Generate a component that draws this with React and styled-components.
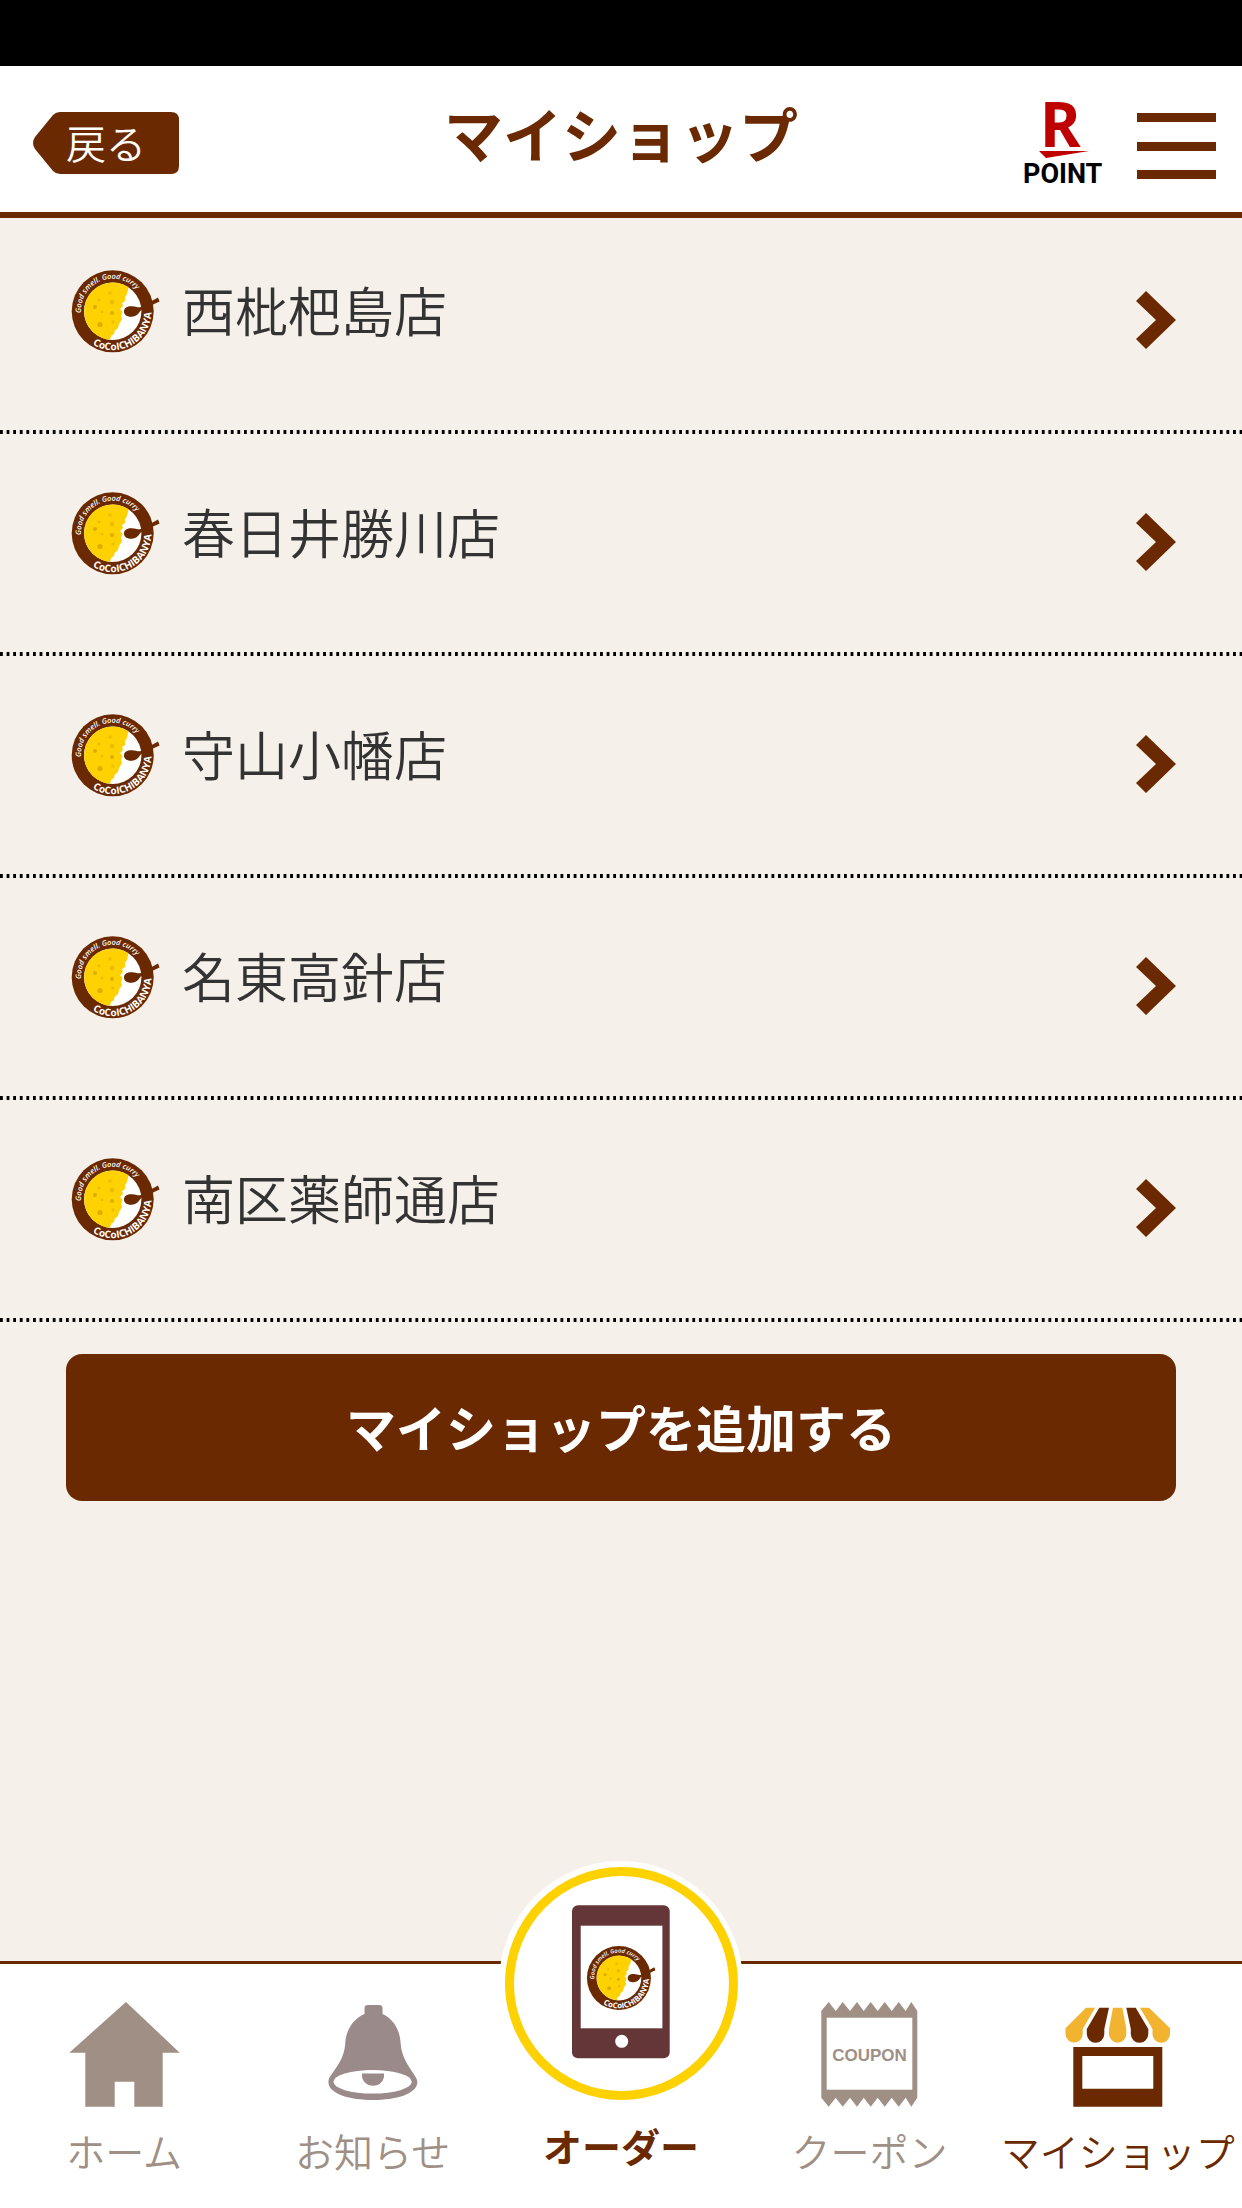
// React imports
import React from "react";

// Style
import styled, { createGlobalStyle, ThemeProvider } from "styled-components";

const theme = {
  colors: {
    brown: "#6a2900",
    bg: "#f5f0ea",
    text: "#333333",
    muted: "#a08f85",
    bell: "#9a8a89",
    yellow: "#fed100",
    awning: "#f2b430",
    phone: "#653637",
    red: "#bf0000",
  },
};
const { colors } = theme;

const GlobalStyle = createGlobalStyle`
  * {
    box-sizing: border-box;
  }
  body {
    margin: 0;
    background-color: ${colors.bg};
    font-family: "Noto Sans CJK JP", sans-serif;
  }
  svg {
    display: block;
    flex-shrink: 0;
    overflow: visible;
  }
`;

const Page = styled.div`
  display: flex;
  flex-direction: column;
  min-height: 100vh;
`;

const StatusBar = styled.div`
  height: 66px;
  background-color: #000;
`;

const Header = styled.header`
  display: grid;
  grid-template-columns: 1fr auto 1fr;
  align-items: center;
  height: 152px;
  padding: 8px 26px 0;
  background-color: #fff;
  border-bottom: 6px solid ${(props) => props.theme.colors.brown};
`;

const BackButton = styled.button`
  display: grid;
  justify-self: start;
  align-items: center;
  margin-left: 7px;
  padding: 0;
  border: none;
  background: none;
  color: #fff;
  font-family: inherit;
  font-weight: 350;
  font-size: 40px;
  line-height: 56px;
  text-align: left;
  cursor: pointer;

  > * {
    grid-area: 1 / 1;
  }
  span {
    padding: 0 0 2px 33px;
  }
`;

const Title = styled.h1`
  margin: 0;
  padding-bottom: 20px;
  color: ${(props) => props.theme.colors.brown};
  font-weight: 700;
  font-size: 59px;
  line-height: 80px;
`;

const HeaderTools = styled.div`
  display: flex;
  align-items: center;
  justify-content: flex-end;
  gap: 34px;
`;

const MenuButton = styled.button`
  display: flex;
  flex-direction: column;
  justify-content: space-between;
  width: 79px;
  height: 72px;
  padding: 6px 0 0;
  border: none;
  background: none;
  cursor: pointer;

  span {
    width: 100%;
    height: 9px;
    background-color: ${(props) => props.theme.colors.brown};
  }
`;

const ShopList = styled.ul`
  display: flex;
  flex-direction: column;
  gap: 6px;
  margin: 0;
  padding: 0;
  list-style: none;
`;

const ShopLink = styled.a`
  display: flex;
  align-items: flex-start;
  height: 216px;
  padding: 52px 66px 0 71px;
  color: ${(props) => props.theme.colors.text};
  text-decoration: none;
  background-image: linear-gradient(to right, #000 50%, transparent 50%);
  background-repeat: repeat-x;
  background-position: left bottom;
  background-size: calc(100% / 188) 4px;
`;

const ShopName = styled.span`
  flex: 1;
  padding-left: 15px;
  font-weight: 350;
  font-size: 53px;
  line-height: 78px;
`;

const Chevron = styled.svg`
  margin-top: 21px;
`;

const AddButton = styled.button`
  height: 147px;
  margin: 32px 66px;
  padding: 0 0 4px;
  border: none;
  border-radius: 16px;
  background-color: ${(props) => props.theme.colors.brown};
  color: #fff;
  font-family: inherit;
  font-weight: 700;
  font-size: 50px;
  line-height: 72px;
  cursor: pointer;
`;

const TabBar = styled.nav`
  display: grid;
  grid-template-columns: repeat(5, 1fr);
  height: 247px;
  margin-top: auto;
  border-top: 3px solid ${(props) => props.theme.colors.brown};
  background-color: #fff;
`;

const Tab = styled.a`
  display: flex;
  flex-direction: column;
  align-items: center;
  gap: ${(props) => (props.$main ? "12px" : "15px")};
  padding-top: ${(props) => (props.$main ? "0" : "38px")};
  color: ${(props) =>
    props.$active ? props.theme.colors.brown : props.theme.colors.muted};
  font-weight: ${(props) => (props.$main ? 700 : 350)};
  font-size: 39px;
  line-height: 56px;
  text-decoration: none;
  white-space: nowrap;

  svg {
    margin-top: ${(props) => (props.$main ? "-103px" : "0")};
  }
`;

// Plate, curry and spoon inside the lettered ring
const LogoMark = ({ id }) => (
  <g>
    <defs>
      <path id={`${id}-top`} d="M10.2 43 A31.5 31.5 0 0 1 71 29" />
      <path id={`${id}-bottom`} d="M21.5 74.4 A38.6 38.6 0 0 0 80.2 38" />
    </defs>
    <circle cx="41.7" cy="41.3" r="41" fill={colors.brown} />
    <circle cx="41.7" cy="41.3" r="28.7" fill="#fff" />
    <path
      d="M57.5 17.2 A28.7 28.7 0 1 0 39 69.8 L40 66 L43 64 L43.5 61 L47 58 L48 54 L51 49 L50 46 L51.5 42 L49 39 L52 36 L51 33 L54 31 L54 27 L56 24 Z"
      fill={colors.yellow}
    />
    <g fill="#dcae00">
      <circle cx="24" cy="37" r="2" />
      <circle cx="29" cy="54.5" r="2.6" />
      <circle cx="41" cy="32" r="2.2" opacity="0.6" />
      <circle cx="41" cy="43" r="2" />
      <circle cx="39" cy="23" r="1.8" opacity="0.5" />
      <circle cx="28" cy="30" r="1.4" opacity="0.6" />
      <circle cx="42" cy="52" r="1.6" opacity="0.5" />
      <circle cx="31" cy="42" r="1.3" opacity="0.6" />
    </g>
    <path
      d="M53 41.5 C53 37.5 57 36 61 36.3 C65 36.5 67 38 70 37 L87 27.6 L88.6 31.4 L71 39.5 C68 41 68 46 61 46.7 C56 47 53 45 53 41.5 Z"
      fill={colors.brown}
    />
    <g fill="#fff" fontFamily="Open Sans, sans-serif">
      <text fontSize="7.4" fontWeight="600" fontStyle="italic">
        <textPath href={`#${id}-top`}>Good smell. Good curry</textPath>
      </text>
      <text fontSize="10" fontWeight="700">
        <textPath href={`#${id}-bottom`}>CoCoICHIBANYA</textPath>
      </text>
    </g>
  </g>
);

const ShopLogo = ({ id }) => (
  <svg width="96" height="84" viewBox="0 0 96 84" aria-hidden="true">
    <LogoMark id={id} />
  </svg>
);

const PointLogo = () => (
  <svg width="80" height="84" viewBox="0 0 80 84" role="img" aria-label="R POINT">
    <text
      x="17"
      y="46"
      fill={colors.red}
      fontFamily="Noto Sans, sans-serif"
      fontWeight="700"
      fontSize="62"
    >
      R
    </text>
    <path d="M16 50 H66 L23 57 Z" fill={colors.red} />
    <text
      x="0"
      y="82"
      fill="#000"
      fontFamily="Roboto, sans-serif"
      fontWeight="700"
      fontSize="27"
    >
      POINT
    </text>
  </svg>
);

const HomeIcon = () => (
  <svg width="111" height="105" viewBox="0 0 111 105" aria-hidden="true">
    <path
      d="M57 0 L110.7 50.7 H93.7 V104.7 H65.3 V79.7 H45.7 V104.7 H16.3 V50.7 H0.3 Z"
      fill={colors.muted}
    />
  </svg>
);

const BellIcon = () => (
  <svg width="90" height="105" viewBox="0 -2 90 105" aria-hidden="true">
    <path
      d="M36.5 10 V4 Q36.5 1 40 1 H51 Q54.5 1 54.5 4 V10 C66 15 72 27 72.6 39 C73.5 53 80 61 87 72 C89 75 89.4 77 89.3 79 C88 90 68 96 45 96 C22 96 1.5 90 0.5 79 C0.3 76 1 74 2.5 72 C10 61 16.5 53 17.3 39 C18 26 25 15 36.5 10 Z"
      fill={colors.bell}
    />
    <ellipse cx="44.6" cy="77.8" rx="39.2" ry="11.8" fill="#fff" />
    <path
      d="M34 69.5 H56 C57 77 51 81.8 45 81.8 C39 81.8 33 77 34 69.5 Z"
      fill={colors.bell}
    />
  </svg>
);

const CouponIcon = () => (
  <svg width="97" height="105" viewBox="0 0 97 105" aria-hidden="true">
    <path
      d="M0.3 9 L7.7 0 L14.7 9 L21.7 0 L29 9 L36 0 L42.7 9 L49.7 0 L56.7 9 L63.7 0 L70.7 9 L77.7 0 L84.7 9 L90.3 0 L96.3 9 V95.7 L90.3 104.7 L84.7 95.7 L77.7 104.7 L70.7 95.7 L63.7 104.7 L56.7 95.7 L49.7 104.7 L42.7 95.7 L36 104.7 L29 95.7 L21.7 104.7 L14.7 95.7 L7.7 104.7 L0.3 95.7 Z"
      fill={colors.muted}
    />
    <rect x="5.7" y="15.7" width="85.6" height="72" fill="#fff" />
    <text
      x="48.5"
      y="59"
      textAnchor="middle"
      fill={colors.muted}
      fontFamily="Liberation Sans, sans-serif"
      fontWeight="700"
      fontSize="17"
    >
      COUPON
    </text>
  </svg>
);

const StoreIcon = () => (
  <svg width="106" height="105" viewBox="0 -5 106 105" aria-hidden="true">
    <g fill={colors.awning}>
      <path d="M21 0.7 H30 L17.7 22 V27 A8.6 8.6 0 0 1 0.5 27 V21.3 Z" />
      <path d="M48 0.7 H57.3 L61.3 22 V27 A8.6 8.6 0 0 1 44 27 V22 Z" />
      <path d="M75 0.7 H84 L105 21.3 V27 A8.6 8.6 0 0 1 87.5 27 V22 Z" />
    </g>
    <g fill={colors.brown}>
      <path d="M34.3 0.7 H44 L39.3 22 V27 A8.7 8.7 0 0 1 21.8 27 V22 Z" />
      <path d="M61.3 0.7 H70.7 L83.3 22 V27 A8.7 8.7 0 0 1 65.8 27 V22 Z" />
      <path
        fillRule="evenodd"
        d="M8.3 40 H97.3 V99.7 H8.3 Z M17.3 49 V81.7 H88.3 V49 Z"
      />
    </g>
  </svg>
);

const OrderIcon = () => (
  <svg width="244" height="244" viewBox="0 0 244 244" aria-hidden="true">
    <circle cx="122" cy="122" r="122" fill="#fff" />
    <circle
      cx="122.5"
      cy="122.5"
      r="112"
      fill="none"
      stroke={colors.yellow}
      strokeWidth="9"
    />
    <rect x="73" y="44.3" width="97.7" height="153" rx="6" fill={colors.phone} />
    <rect x="81.7" y="64.7" width="81.7" height="102.6" fill="#fff" />
    <circle cx="122.7" cy="180.3" r="6.5" fill="#fff" />
    <g transform="translate(87.4 84.8) scale(0.78)">
      <LogoMark id="order" />
    </g>
  </svg>
);

const shops = [
  "西枇杷島店",
  "春日井勝川店",
  "守山小幡店",
  "名東高針店",
  "南区薬師通店",
];

const App = () => {
  return (
    <ThemeProvider theme={theme}>
      <GlobalStyle />
      <Page>
        <StatusBar />
        <Header>
          <BackButton type="button">
            <svg width="146" height="62" viewBox="0 0 146 62" aria-hidden="true">
              <path
                d="M27 0 H138 Q146 0 146 8 V54 Q146 62 138 62 H27 Q23 62 20 59 L2 37 Q-2 31 2 25 L20 3 Q23 0 27 0 Z"
                fill={colors.brown}
              />
            </svg>
            <span>戻る</span>
          </BackButton>
          <Title>マイショップ</Title>
          <HeaderTools>
            <PointLogo />
            <MenuButton type="button" aria-label="メニュー">
              <span />
              <span />
              <span />
            </MenuButton>
          </HeaderTools>
        </Header>
        <ShopList>
          {shops.map((name, index) => (
            <li key={name}>
              <ShopLink href="#">
                <ShopLogo id={`shop-${index}`} />
                <ShopName>{name}</ShopName>
                <Chevron width="40" height="58" viewBox="0 0 40 58" aria-hidden="true">
                  <path d="M10 0 L40 29 L10 58 L0 48 L20 29 L0 10 Z" fill={colors.brown} />
                </Chevron>
              </ShopLink>
            </li>
          ))}
        </ShopList>
        <AddButton type="button">マイショップを追加する</AddButton>
        <TabBar>
          <Tab href="#">
            <HomeIcon />
            ホーム
          </Tab>
          <Tab href="#">
            <BellIcon />
            お知らせ
          </Tab>
          <Tab href="#" $main $active>
            <OrderIcon />
            オーダー
          </Tab>
          <Tab href="#">
            <CouponIcon />
            クーポン
          </Tab>
          <Tab href="#" $active>
            <StoreIcon />
            マイショップ
          </Tab>
        </TabBar>
      </Page>
    </ThemeProvider>
  );
};

export default App;
